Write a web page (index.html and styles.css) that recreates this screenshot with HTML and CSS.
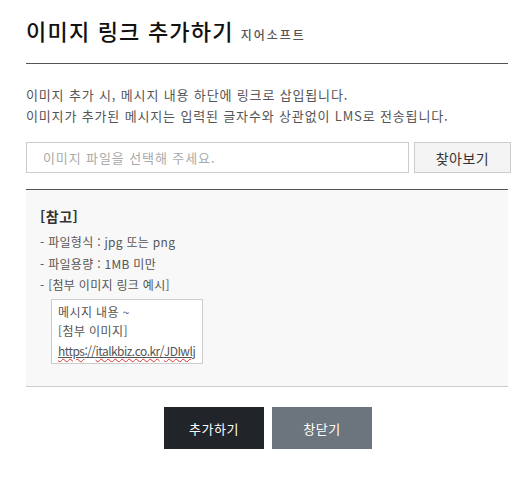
FILE: index.html
```html
<!DOCTYPE html>
<html lang="ko">
<head>
<meta charset="utf-8">
<title>이미지 링크 추가하기</title>
<link rel="stylesheet" href="styles.css">
</head>
<body>
<div class="popup">
  <div class="header">
    <h1 class="title">이미지 링크 추가하기</h1>
    <span class="brand">지어소프트</span>
  </div>
  <div class="desc">
    <p>이미지 추가 시, 메시지 내용 하단에 링크로 삽입됩니다.</p>
    <p>이미지가 추가된 메시지는 입력된 글자수와 상관없이 LMS로 전송됩니다.</p>
  </div>
  <div class="file-row">
    <div class="file-input">이미지 파일을 선택해 주세요.</div>
    <button class="find-btn" type="button">찾아보기</button>
  </div>
  <div class="note">
    <div class="note-title">[참고]</div>
    <ul class="note-list">
      <li>- 파일형식 : jpg 또는 png</li>
      <li>- 파일용량 : 1MB 미만</li>
      <li>- [첨부 이미지 링크 예시]</li>
    </ul>
    <div class="example">
      <div>메시지 내용 ~</div>
      <div>[첨부 이미지]</div>
      <div class="link"><span class="sp">https</span>://<span class="sp">italkbiz.co.kr</span>/<span class="sp">JDIwlj</span></div>
    </div>
  </div>
  <div class="actions">
    <button class="btn btn-dark" type="button">추가하기</button>
    <button class="btn btn-gray" type="button">창닫기</button>
  </div>
</div>
</body>
</html>
```
FILE: styles.css
```css
* { box-sizing: border-box; }
body {
  margin: 0;
  background: #fff;
  font-family: "Noto Sans CJK KR", "Noto Sans", sans-serif;
  color: #333;
}
.popup {
  padding: 0 19px 0 26px;
}
.header {
  display: flex;
  align-items: baseline;
  gap: 7px;
  padding: 14px 0 17px;
  border-bottom: 1px solid #555;
}
.title {
  margin: 0;
  font-size: 22px;
  line-height: 32px;
  font-weight: 500;
  color: #111;
  letter-spacing: 1.2px;
}
.brand {
  font-size: 12px;
  font-weight: 500;
  color: #555;
  letter-spacing: 2px;
}
.desc {
  margin-top: 20px;
}
.desc p {
  margin: 0;
  font-size: 13px;
  line-height: 21px;
  color: #555;
  letter-spacing: 0.85px;
}
.file-row {
  display: flex;
  gap: 5px;
  margin-top: 16px;
  margin-right: -4px;
  height: 31px;
}
.file-input {
  width: 383px;
  border: 1px solid #ccc;
  padding-left: 16px;
  font-size: 13px;
  line-height: 29px;
  color: #aaa;
  letter-spacing: 0.9px;
}
.find-btn {
  width: 97px;
  border: 1px solid #ccc;
  background: #f4f4f4;
  font-family: inherit;
  font-size: 14px;
  color: #333;
  padding: 0;
  letter-spacing: 0.5px;
}
.note {
  margin-top: 16px;
  border-top: 1px solid #555;
  border-bottom: 1px solid #ccc;
  background: #f8f8f8;
  padding: 15px 14px 22px;
}
.note-title {
  font-size: 14px;
  font-weight: 700;
  line-height: 22px;
  color: #333;
  letter-spacing: 0.5px;
}
.note-list {
  list-style: none;
  margin: 4px 0 0;
  padding: 0;
}
.note-list li {
  font-size: 12px;
  line-height: 21.5px;
  color: #555;
  letter-spacing: 0.3px;
}
.example {
  margin: 3px 0 0 11px;
  width: 152px;
  border: 1px solid #ccc;
  background: #fff;
  padding: 2px 0 3px 6px;
  font-size: 12px;
  line-height: 19.5px;
  color: #555;
  white-space: nowrap;
  overflow: hidden;
  letter-spacing: 0.4px;
}
.link {
  letter-spacing: -0.55px;
  text-decoration: underline;
  text-decoration-color: #555;
  text-underline-offset: 1px;
}
.sp {
  text-decoration: underline wavy #e03030;
  text-underline-offset: 2px;
  text-decoration-thickness: 1px;
}
.actions {
  display: flex;
  justify-content: center;
  gap: 8px;
  margin-top: 20px;
  padding-left: 2px;
}
.btn {
  width: 100px;
  height: 42px;
  border: none;
  font-family: inherit;
  font-size: 13px;
  color: #fff;
  padding: 0;
  letter-spacing: 0.6px;
}
.btn-dark { background: #212529; }
.btn-gray { background: #6c757d; }
```
